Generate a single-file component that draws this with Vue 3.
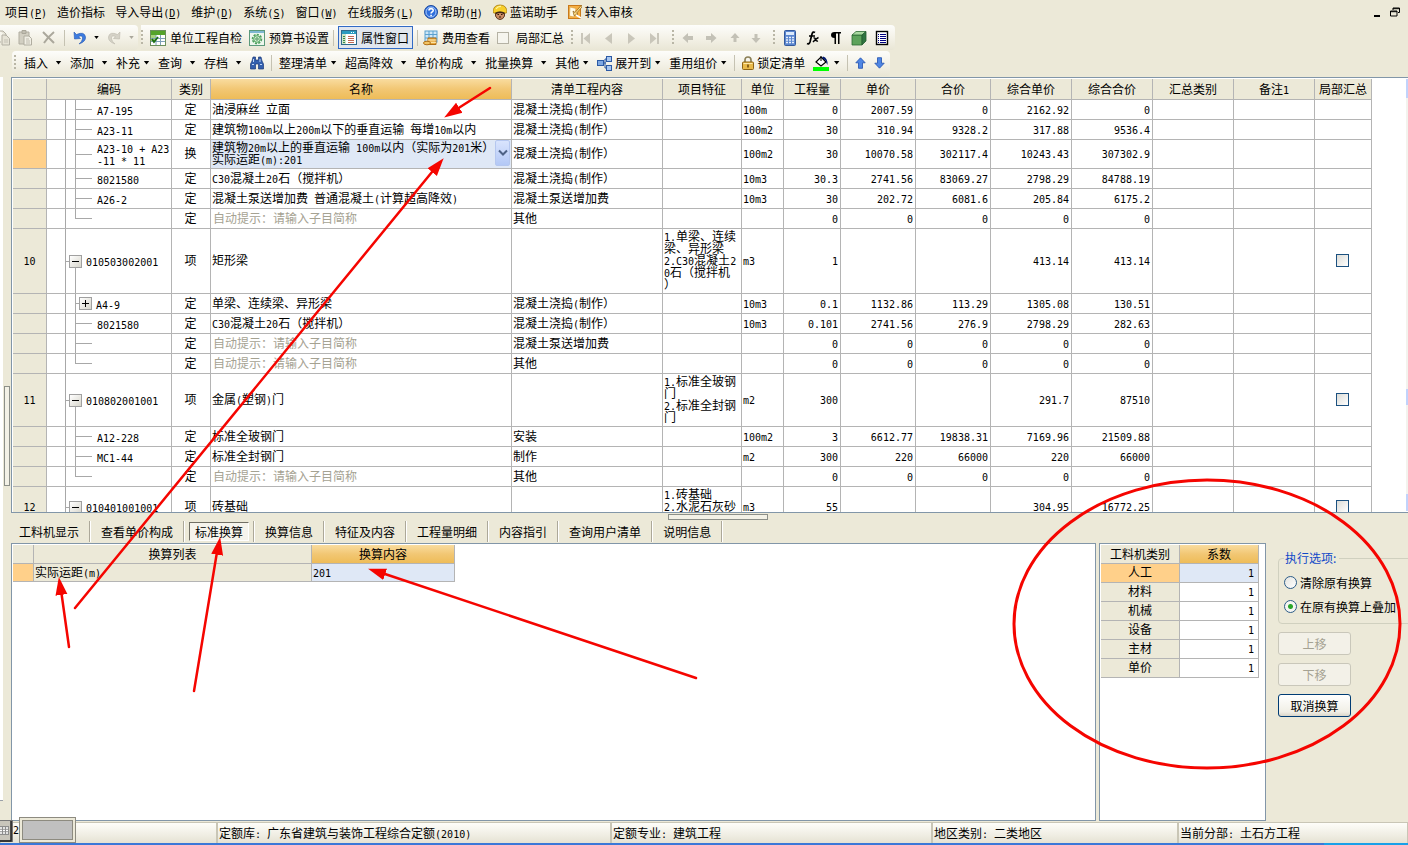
<script setup>
import { h, ref } from 'vue'

const Mix = (props) =>
  h(
    'span',
    { class: 'mix' },
    props.t
      .split(/([\x20-\x7e]+)/)
      .filter((s) => s)
      .map((s) => (/^[\x20-\x7e]/.test(s) ? h('span', { class: 'latin' }, s) : s))
  )
Mix.props = ['t']

const menus = [
  { t: '项目', k: 'P' },
  { t: '造价指标' },
  { t: '导入导出', k: 'D' },
  { t: '维护', k: 'D' },
  { t: '系统', k: 'S' },
  { t: '窗口', k: 'W' },
  { t: '在线服务', k: 'L' },
]

const actions = [
  { t: '插入', wide: true },
  { t: '添加', wide: true },
  { t: '补充' },
  { t: '查询', wide: true },
  { t: '存档', wide: true },
]
const actions2 = [
  { t: '整理清单' },
  { t: '超高降效', wide: true },
  { t: '单价构成', wide: true },
  { t: '批量换算', wide: true },
  { t: '其他' },
]

const columns = [
  { t: '', w: 34 },
  { t: '编码', w: 125 },
  { t: '类别', w: 39 },
  { t: '名称', w: 301, hot: true },
  { t: '清单工程内容', w: 151 },
  { t: '项目特征', w: 79 },
  { t: '单位', w: 42 },
  { t: '工程量', w: 57 },
  { t: '单价', w: 75 },
  { t: '合价', w: 75 },
  { t: '综合单价', w: 81 },
  { t: '综合合价', w: 81 },
  { t: '汇总类别', w: 81 },
  { t: '备注1', w: 81 },
  { t: '局部汇总', w: 57 },
]

const hint = '自动提示：请输入子目简称'
const pour = '混凝土浇捣(制作）'
const rows = [
  { kind: 'child', code: 'A7-195', cat: '定', name: '油浸麻丝 立面', work: pour, unit: '100m', n: ['0', '2007.59', '0', '2162.92', '0'] },
  { kind: 'child', code: 'A23-11', cat: '定', name: '建筑物100m以上200m以下的垂直运输 每增10m以内', work: pour, unit: '100m2', n: ['30', '310.94', '9328.2', '317.88', '9536.4'] },
  { kind: 'child', sel: true, size: 'two', code: 'A23-10 + A23\n-11 * 11', cat: '换', name: '建筑物20m以上的垂直运输 100m以内（实际为201米）\n实际运距(m):201', work: pour, unit: '100m2', n: ['30', '10070.58', '302117.4', '10243.43', '307302.9'] },
  { kind: 'child', code: '8021580', cat: '定', name: 'C30混凝土20石（搅拌机）', work: pour, unit: '10m3', n: ['30.3', '2741.56', '83069.27', '2798.29', '84788.19'] },
  { kind: 'child', code: 'A26-2', cat: '定', name: '混凝土泵送增加费 普通混凝土(计算超高降效)', work: '混凝土泵送增加费', unit: '10m3', n: ['30', '202.72', '6081.6', '205.84', '6175.2'] },
  { kind: 'last', code: '', cat: '定', name: hint, hint: true, work: '其他', unit: '', n: ['0', '0', '0', '0', '0'] },
  { kind: 'parent', size: 'five', num: '10', code: '010503002001', cat: '项', name: '矩形梁', work: '', feat: '1.单梁、连续\n梁、异形梁\n2.C30混凝土2\n0石（搅拌机\n）', unit: 'm3', n: ['1', '', '', '413.14', '413.14'] },
  { kind: 'closed', code: 'A4-9', cat: '定', name: '单梁、连续梁、异形梁', work: pour, unit: '10m3', n: ['0.1', '1132.86', '113.29', '1305.08', '130.51'] },
  { kind: 'child', code: '8021580', cat: '定', name: 'C30混凝土20石（搅拌机）', work: pour, unit: '10m3', n: ['0.101', '2741.56', '276.9', '2798.29', '282.63'] },
  { kind: 'child', code: '', cat: '定', name: hint, hint: true, work: '混凝土泵送增加费', unit: '', n: ['0', '0', '0', '0', '0'] },
  { kind: 'last', code: '', cat: '定', name: hint, hint: true, work: '其他', unit: '', n: ['0', '0', '0', '0', '0'] },
  { kind: 'parent', size: 'four', num: '11', code: '010802001001', cat: '项', name: '金属(塑钢)门', work: '', feat: '1.标准全玻钢\n门\n2.标准全封钢\n门', unit: 'm2', n: ['300', '', '', '291.7', '87510'] },
  { kind: 'child', code: 'A12-228', cat: '定', name: '标准全玻钢门', work: '安装', unit: '100m2', n: ['3', '6612.77', '19838.31', '7169.96', '21509.88'] },
  { kind: 'child', code: 'MC1-44', cat: '定', name: '标准全封钢门', work: '制作', unit: 'm2', n: ['300', '220', '66000', '220', '66000'] },
  { kind: 'last', code: '', cat: '定', name: hint, hint: true, work: '其他', unit: '', n: ['0', '0', '0', '0', '0'] },
  { kind: 'parent', size: 'three', num: '12', code: '010401001001', cat: '项', name: '砖基础', work: '', feat: '1.砖基础\n2.水泥石灰砂\n浆', unit: 'm3', n: ['55', '', '', '304.95', '16772.25'] },
]

const tabs = ['工料机显示', '查看单价构成', '标准换算', '换算信息', '特征及内容', '工程量明细', '内容指引', '查询用户清单', '说明信息']
const tab = ref('标准换算')
const factors = ['人工', '材料', '机械', '设备', '主材', '单价']
const mode = ref('add')
const status = ['', '定额库: 广东省建筑与装饰工程综合定额(2010)', '定额专业: 建筑工程', '地区类别: 二类地区', '当前分部: 土石方工程']
</script>

<template>
  <div class="app">
    <nav class="menubar">
      <button v-for="m in menus" :key="m.t" class="flat">
        <span>{{ m.t }}<span v-if="m.k" class="latin">(<u>{{ m.k }}</u>)</span></span>
      </button>
      <button class="flat">
        <svg width="14" height="14" viewBox="0 0 14 14"><circle cx="7" cy="7" r="6.5" fill="#2f6fdc" stroke="#1d4a9e" /><circle cx="7" cy="7" r="5" fill="none" stroke="#a9c8f8" /><path d="M5 5.6C5 3 9.2 3 9.2 5.4 9.2 6.9 7.1 6.9 7.1 8.6M7.1 9.8v1.4" fill="none" stroke="#fff" stroke-width="1.6" /></svg>
        <span>帮助<span class="latin">(<u>H</u>)</span></span>
      </button>
      <button class="flat">
        <svg width="14" height="16" viewBox="0 0 14 16"><path d="M2.500 8h9v4q-1.500 3.500-4.500 3.500T2.500 12z" fill="#c98a63" stroke="#5d3620" /><path d="M0 8.500Q0 1 7 1t7 7.500l-2 .8Q7 6.500 2 9.300z" fill="#f7cf2b" stroke="#a87c0d" stroke-width=".8" /><path d="M3 5Q5 2 8 2.500" stroke="#fff3a0" stroke-width="1.300" fill="none" /><path d="M2.500 9.500Q7 7 11.500 9.500" stroke="#3a2416" stroke-width="1.600" fill="none" /><path d="M4.500 10.500h1.500M8 10.500h1.500M6 13h2" stroke="#301808" /></svg>
        <span>蓝诺助手</span>
      </button>
      <button class="flat">
        <svg width="14" height="16" viewBox="0 0 14 16"><rect x=".5" y="1.500" width="12" height="13" fill="#f6b042" stroke="#c9791a" /><path d="M2 3l6 1.500L6 13l-4.500-1z" fill="#fffbe8" stroke="#d89a3a" stroke-width=".6" /><path d="M13.500 1L7 8.500 5 7l1 4.500 4-1.500-1.500-.8L14 3z" fill="#ffe08a" stroke="#8a5a14" stroke-width=".7" /><path d="M8 11l5 3" stroke="#fff" stroke-width="1.500" /></svg>
        <span>转入审核</span>
      </button>
      <div class="winctl">
        <button class="flat" aria-label="最小化"><svg width="8" height="12" viewBox="0 0 8 12"><path d="M1 9h6v2H1z" /></svg></button>
        <button class="flat" aria-label="还原"><svg width="10" height="10" viewBox="0 0 10 10"><path d="M3 3V1h6.500v4.500H8M3 1.700h6.500M.5 4h6.500v5H.5zM.5 4.700h6.500" fill="none" stroke="#000" /></svg></button>
      </div>
    </nav>

    <div class="bar">
      <div class="band first">
        <button class="flat" aria-label="复制" disabled><svg width="10" height="16" viewBox="0 0 10 16"><path d="M0 1h3l3 3v2M0 12h1M2 5h4l3.500 3.500V15H2z" fill="#e6e3d6" stroke="#b3b0a4" /><path d="M4 10h4M4 12h4" stroke="#c4c1b5" /></svg></button>
        <button class="flat" aria-label="粘贴" disabled><svg width="15" height="16" viewBox="0 0 15 16"><path d="M1 2h10v12H1z" fill="#d2cfc2" stroke="#b0ada0" /><path d="M4 .5h4v3H4z" fill="#c2bfb2" stroke="#aaa79a" /><path d="M6 6h5l2.500 2.500v6.500H6z" fill="#f0eee4" stroke="#b0ada0" /><path d="M8 9h3M8 11h4M8 13h4" stroke="#c0bdb0" /></svg></button>
        <button class="flat" aria-label="删除" disabled><svg width="15" height="15" viewBox="0 0 15 15"><path d="M2 2l11 11M13 2Q7 7 3 13" fill="none" stroke="#aba89c" stroke-width="2" /></svg></button>
        <i class="sep"></i>
        <button class="flat drop wide" aria-label="撤销"><svg width="13" height="14" viewBox="0 0 13 14"><path d="M1 1l.5 7 6-.5-2-1.700C8 4 10 5 9.500 8q-.5 2.500-3.500 5Q13 10.500 12.500 6 11.500 0 3.500 3.500z" fill="#3d7ce0" stroke="#2356b0" stroke-width=".6" /></svg><i class="caret"></i></button>
        <button class="flat drop wide" aria-label="重做" disabled><svg width="13" height="14" viewBox="0 0 13 14"><path d="M12 1l-.5 7-6-.5 2-1.700C5 4 3 5 3.500 8q.5 2.500 3.500 5Q0 10.500.5 6 1.500 0 9.500 3.500z" fill="#d5d2c7" stroke="#bcb9ad" stroke-width=".6" /></svg><i class="caret dim"></i></button>
      </div>
      <div class="band tools">
        <i class="grip"></i>
        <button class="flat ico">
          <svg width="16" height="16" viewBox="0 0 16 16"><rect x=".5" y=".5" width="15" height="15" fill="#fff" stroke="#6c8f5c" /><path d="M1 1h14v4H1z" fill="#55a32a" /><path d="M1 5h5v6H1z" fill="#a6d37c" /><path d="M1 8.500h14M1 11.500h14M6 5v10M10.500 5v10" stroke="#7fa0b8" /><path d="M2 9l2 3 4-5" fill="none" stroke="#1c6f10" stroke-width="1.800" /></svg>
          <span>单位工程自检</span>
        </button>
        <button class="flat ico">
          <svg width="16" height="16" viewBox="0 0 16 16"><rect x=".5" y=".5" width="15" height="15" fill="#eef7ee" stroke="#5c9a7c" /><path d="M1 1h14v2H1z" fill="#7fb7d2" /><circle cx="8" cy="9" r="4.500" fill="none" stroke="#4da05c" stroke-width="1.500" stroke-dasharray="2.200 1.200" /><circle cx="8" cy="9" r="3.300" fill="#d5eed2" stroke="#4da05c" /><circle cx="8" cy="9" r="1.200" fill="#fff" stroke="#3a8b4a" /></svg>
          <span>预算书设置</span>
        </button>
        <i class="sep"></i>
        <button class="flat ico pressed">
          <svg width="16" height="16" viewBox="0 0 16 16"><rect x=".5" y=".5" width="15" height="14" fill="#fff" stroke="#2f6a8c" /><path d="M1 1h14v3H1z" fill="#2a9cc0" /><path d="M10 2.500h1M12 2.500h1" stroke="#fff" /><path d="M1 4h4v10H1z" fill="#cfe6c8" /><path d="M2 6.500h2M2 8.500h2M2 10.500h2M2 12.500h2" stroke="#3c8a4c" /><path d="M7 6.500h6M7 8.500h6M7 10.500h6M7 12.500h6" stroke="#bf6a54" /></svg>
          <span>属性窗口</span>
        </button>
        <i class="sep"></i>
        <button class="flat ico">
          <svg width="16" height="16" viewBox="0 0 16 16"><rect x="3" y="1" width="12" height="11" fill="#cfe7f7" stroke="#5ba1cf" /><path d="M3 4.500h12M3 8h12M7 1v11M11 1v11" stroke="#5ba1cf" /><path d="M6 8h8v6.500H6z" fill="#e8a83c" stroke="#b06f16" /><path d="M6 10h8M6 12.300h8" stroke="#fff0bf" /><ellipse cx="5" cy="13" rx="3.500" ry="1.800" fill="#f2c465" stroke="#b06f16" /></svg>
          <span>费用查看</span>
        </button>
        <label class="check"><input type="checkbox" class="box pale" /><span>局部汇总</span></label>
        <i class="grip"></i>
        <button class="flat" aria-label="首条" disabled><svg width="16" height="16" viewBox="0 0 16 16"><path d="M1 3h2v11H1zM10 3v11L3.500 8.500z" fill="#c9c6ba" /></svg></button>
        <button class="flat" aria-label="上一条" disabled><svg width="16" height="16" viewBox="0 0 16 16"><path d="M9 3v11L2 8.500z" fill="#c9c6ba" /></svg></button>
        <button class="flat" aria-label="下一条" disabled><svg width="16" height="16" viewBox="0 0 16 16"><path d="M2 3v11l7-5.500z" fill="#c9c6ba" /></svg></button>
        <button class="flat" aria-label="末条" disabled><svg width="16" height="16" viewBox="0 0 16 16"><path d="M8 3h2v11H8zM1 3v11l6.500-5.500z" fill="#c9c6ba" /></svg></button>
        <i class="grip"></i>
        <button class="flat" aria-label="左移" disabled><svg width="16" height="16" viewBox="0 0 16 16"><path d="M1.500 8L7 3v3h5v4H7v3z" fill="#c3c1b6" /></svg></button>
        <button class="flat" aria-label="右移" disabled><svg width="16" height="16" viewBox="0 0 16 16"><path d="M12.500 8L7 3v3H2v4h5v3z" fill="#c3c1b6" /></svg></button>
        <button class="flat" aria-label="上移一行" disabled><svg width="16" height="16" viewBox="0 0 16 16"><path d="M8 3l4.500 5h-3v4h-3V8h-3z" fill="#c3c1b6" /></svg></button>
        <button class="flat" aria-label="下移一行" disabled><svg width="16" height="16" viewBox="0 0 16 16"><path d="M6 13L1.500 8h3V4h3v4h3z" fill="#c3c1b6" /></svg></button>
        <i class="grip"></i>
        <button class="flat" aria-label="计算器"><svg width="16" height="16" viewBox="0 0 16 16"><rect x="2.500" y=".5" width="11" height="15" rx="1" fill="#5a86cf" stroke="#345a9c" /><path d="M4 2h8v3H4z" fill="#dceafc" /><path d="M4 7.500h8M4 10h8M4 12.500h8" stroke="#e8f0fc" stroke-width="1.500" stroke-dasharray="2 1" /></svg></button>
        <button class="flat" aria-label="函数"><svg width="16" height="16" viewBox="0 0 16 16"><path d="M10 2.500Q8 1 7 4L5 12Q4.200 14.500 2 13.500M4 6h6" fill="none" stroke="#000" stroke-width="1.700" /><path d="M8.500 8q1.500-.5 2 1.500t2.500 1.500M13.500 7.500Q11 8.500 8 12" fill="none" stroke="#000" stroke-width="1.400" /></svg></button>
        <button class="flat" aria-label="段落"><svg width="16" height="16" viewBox="0 0 16 16"><path d="M13 2H6.500Q3 2 3 5t3.500 3V14H8V3.500h2V14h1.500V3.500H13z" fill="#000" /></svg></button>
        <button class="flat" aria-label="图集"><svg width="16" height="16" viewBox="0 0 16 16"><path d="M1 5h10v10H1z" fill="#5ea35c" stroke="#2c6b33" stroke-width=".8" /><path d="M1 5l4-3.500h10L11 5z" fill="#a9d8a0" stroke="#2c6b33" stroke-width=".8" /><path d="M11 5l4-3.500V11l-4 4z" fill="#2f7440" stroke="#235a30" stroke-width=".8" /></svg></button>
        <button class="flat" aria-label="列表"><svg width="16" height="16" viewBox="0 0 16 16"><rect x="2.500" y="1.500" width="11" height="13" fill="#fff" stroke="#000" stroke-width="1.400" /><path d="M4 4.500h1M4 6.500h1M4 8.500h1M4 10.500h1M4 12.500h1" stroke="#000080" /><path d="M6 4.500h6M6 6.500h6M6 8.500h6M6 10.500h6M6 12.500h6" stroke="#000080" /></svg></button>
      </div>
    </div>

    <div class="bar">
      <div class="band second">
        <i class="grip"></i>
        <button v-for="a in actions" :key="a.t" class="flat drop" :class="{ wide: a.wide }">{{ a.t }}<i class="caret"></i></button>
        <button class="flat" aria-label="查找"><svg width="14" height="14" viewBox="0 0 14 14"><path d="M3 1h2.500v3h3V1H11l1 4 1.500 3v5H8.500V8h-3v5H.5V8L2 5z" fill="#335fae" stroke="#1b3a7a" stroke-width=".7" /><path d="M2 8.500h2M10 8.500h2M3.500 3v3M10 3v3" stroke="#bcd3f5" /></svg></button>
        <i class="sep"></i>
        <button v-for="a in actions2" :key="a.t" class="flat drop" :class="{ wide: a.wide }">{{ a.t }}<i class="caret"></i></button>
        <button class="flat drop">
          <svg class="lead" width="15" height="15" viewBox="0 0 15 15"><path d="M6 7h3M8 3v9M8 3h2M8 12h2" stroke="#23539e" fill="none" /><rect x=".5" y="4.500" width="6" height="5" fill="#7fa8e2" stroke="#2c5aa5" /><rect x="9.500" y=".5" width="5" height="5" fill="#a7c6f0" stroke="#2c5aa5" /><rect x="9.500" y="9.500" width="5" height="5" fill="#a7c6f0" stroke="#2c5aa5" /></svg>展开到<i class="caret"></i>
        </button>
        <button class="flat drop">重用组价<i class="caret"></i></button>
        <i class="sep"></i>
        <button class="flat">
          <svg width="12" height="14" viewBox="0 0 12 14"><path d="M3 6V4q0-3 3-3t3 3v2" fill="none" stroke="#8b8058" stroke-width="1.700" /><rect x=".5" y="6" width="11" height="7.500" rx="1" fill="#e9ba4a" stroke="#8d6416" /><path d="M1.500 7.500h9" stroke="#ffe9a8" /><path d="M6 8.500v3" stroke="#6a4408" stroke-width="1.500" /></svg>
          <span>锁定清单</span>
        </button>
        <button class="flat drop" aria-label="填充颜色"><svg width="17" height="16" viewBox="0 0 17 16"><path d="M0 12h16v4H0z" fill="#0f0" /><path d="M3 7l5-5 5 5-5 4z" fill="#fff" stroke="#000" stroke-width="1.200" /><path d="M8 1v5" stroke="#000" /><path d="M10 1.500Q15 3 14.500 10 13 8 13 6L9 3z" fill="#00186e" /></svg><i class="caret"></i></button>
        <i class="sep"></i>
        <button class="flat" aria-label="上移"><svg width="11" height="12" viewBox="0 0 11 12"><path d="M5.500.8l4.700 5H7.500v5.500h-4V5.800H.8z" fill="#4f86e4" stroke="#1f4fae" stroke-width=".8" /></svg></button>
        <button class="flat" aria-label="下移"><svg width="11" height="12" viewBox="0 0 11 12"><path d="M5.500 11.200l-4.700-5h2.700V.7h4v5.500h2.700z" fill="#4f86e4" stroke="#1f4fae" stroke-width=".8" /></svg></button>
      </div>
    </div>

    <div class="body">
      <div class="gutter"><i class="strip"></i><i class="handle"></i></div>
      <main class="work">
        <section class="grid-pane">
          <table class="grid main-grid">
            <colgroup><col v-for="(c, i) in columns" :key="i" :style="{ width: c.w + 'px' }" /></colgroup>
            <thead>
              <tr><th v-for="(c, i) in columns" :key="i" :class="{ hot: c.hot }"><Mix :t="c.t" /></th></tr>
            </thead>
            <tbody>
              <tr v-for="(r, i) in rows" :key="i" :class="[r.size, { sel: r.sel }]">
                <th><Mix :t="r.num || ''" /></th>
                <td class="tree" :class="r.kind">
                  <div class="node">
                    <button v-if="r.kind === 'parent'" class="fold" aria-label="收起"><svg width="11" height="11" viewBox="0 0 11 11"><path d="M2 5h7v1H2z" /></svg></button>
                    <button v-if="r.kind === 'closed'" class="fold" aria-label="展开"><svg width="11" height="11" viewBox="0 0 11 11"><path d="M2 5h7v1H2zM5 2h1v7H5z" /></svg></button>
                    <Mix :t="r.code" />
                  </div>
                </td>
                <td class="mid">{{ r.cat }}</td>
                <td class="name" :class="{ hint: r.hint }">
                  <div v-if="r.sel" class="editor">
                    <Mix :t="r.name" />
                    <button class="combo" aria-label="下拉"><svg width="10" height="8" viewBox="0 0 10 8"><path d="M1 1.500l4 4 4-4" fill="none" stroke="#4d6185" stroke-width="2" /></svg></button>
                  </div>
                  <Mix v-else :t="r.name" />
                </td>
                <td><Mix :t="r.work" /></td>
                <td><Mix :t="r.feat || ''" /></td>
                <td><Mix :t="r.unit" /></td>
                <td v-for="(v, j) in r.n" :key="j" class="num"><Mix :t="v" /></td>
                <td></td>
                <td></td>
                <td class="mid"><input v-if="r.kind === 'parent'" type="checkbox" class="box" aria-label="局部汇总" /></td>
              </tr>
            </tbody>
          </table>
          <i class="scroll"></i>
        </section>

        <div class="splitter"><i></i></div>
        <div class="tabs">
          <div v-for="t in tabs" :key="t" class="tab">
            <button class="flat" :class="{ on: t === tab }" @click="tab = t">{{ t }}</button>
          </div>
        </div>

        <section class="lower">
          <div class="pane list">
            <table class="grid small">
              <colgroup><col class="w-mark" /><col class="w-list" /><col class="w-value" /></colgroup>
              <thead><tr><th></th><th>换算列表</th><th class="hot">换算内容</th></tr></thead>
              <tbody><tr class="sel"><th></th><td class="fixed"><Mix t="实际运距(m)" /></td><td class="name"><Mix t="201" /></td></tr></tbody>
            </table>
          </div>
          <div class="pane factors">
            <table class="grid small fac">
              <colgroup><col class="w-half" /><col class="w-half" /></colgroup>
              <thead><tr><th>工料机类别</th><th class="hot">系数</th></tr></thead>
              <tbody>
                <tr v-for="(f, i) in factors" :key="f" :class="{ sel: i === 0 }"><th>{{ f }}</th><td class="num name"><Mix t="1" /></td></tr>
              </tbody>
            </table>
          </div>
          <aside class="side">
            <fieldset>
              <legend>执行选项:</legend>
              <label><input v-model="mode" type="radio" name="mode" value="clear" /><span>清除原有换算</span></label>
              <label><input v-model="mode" type="radio" name="mode" value="add" /><span>在原有换算上叠加</span></label>
            </fieldset>
            <button class="push" disabled>上移</button>
            <button class="push" disabled>下移</button>
            <button class="push live">取消换算</button>
          </aside>
        </section>
      </main>
    </div>

    <footer>
      <div class="status"><div v-for="(s, i) in status" :key="i"><Mix :t="s" /></div></div>
      <div class="edge"></div>
      <div class="ime">
        <svg width="13" height="22" viewBox="0 0 13 22"><path d="M0 0h13v22H0z" fill="#777" /><path d="M0 1h11v19H0z" fill="#c8c5bb" /><path d="M11 1v20H0" fill="none" stroke="#222" stroke-width="1.500" /><path d="M0 6h9v9H0z" fill="#8d8d8d" /><path d="M0 8h9M0 10.500h9M0 13h9" stroke="#fff" stroke-width="1.300" stroke-dasharray="2 1" /></svg>
        <span class="latin">2</span>
        <i class="thumb"></i>
      </div>
    </footer>

    <svg class="marks" width="1408" height="845" viewBox="0 0 1408 845" aria-hidden="true">
      <defs><marker id="tip" markerUnits="userSpaceOnUse" markerWidth="18" markerHeight="14" refX="17" refY="7" orient="auto"><path d="M0 1l18 6-18 6z" fill="#f50500" /></marker></defs>
      <g fill="none" stroke="#f50500" stroke-width="3" stroke-linecap="round">
        <ellipse cx="1207" cy="624" rx="193" ry="144" />
        <g stroke-width="2.500">
          <path d="M490 88L457 109" /><path d="M75 608L432 172" /><path d="M69 647L61 590" /><path d="M194 691L217 552" /><path d="M696 678L382 573" />
        </g>
        <g stroke="none">
          <path d="M490 88L445 117" marker-end="url(#tip)" /><path d="M75 608L443 159" marker-end="url(#tip)" /><path d="M69 647L59 578" marker-end="url(#tip)" /><path d="M194 691L220 538" marker-end="url(#tip)" /><path d="M696 678L369 569" marker-end="url(#tip)" />
        </g>
      </g>
    </svg>
  </div>
</template>

<style>
body { margin: 0; overflow: hidden; background: #ece9d8; }
</style>

<style scoped>
.app, .app * { box-sizing: border-box; }
.app {
  position: relative;
  display: flex;
  flex-direction: column;
  height: 100vh;
  overflow: hidden;
  background: #ece9d8;
  color: #000;
  font: 12px/12px "Noto Sans CJK SC", sans-serif;
  white-space: nowrap;
}
svg { display: block; flex: none; }
.latin, :deep(.latin) { font: 10px/8px "DejaVu Sans Mono", monospace; white-space: inherit; }
:deep(.mix) { white-space: pre; }
button { font: inherit; color: inherit; }
.flat { display: flex; align-items: center; gap: 3px; padding: 0; border: 0; background: none; white-space: nowrap; flex: none; }

.menubar { display: flex; align-items: center; gap: 10px; flex: none; height: 25px; padding: 0 0 2px 5px; }
.winctl { display: flex; gap: 9px; margin-left: auto; padding-right: 8px; }

.bar { display: flex; flex: none; height: 26px; }
.band {
  display: flex;
  align-items: center;
  height: 25px;
  gap: 8px;
  padding-right: 5px;
  border-radius: 0 4px 4px 0;
  background: linear-gradient(#fdfdfb, #f4f2e8 50%, #e9e6d5);
}
.first { padding-right: 3px; margin-right: 3px; }
.tools { gap: 7px; }
.second { margin-left: 12px; padding-left: 2px; padding-bottom: 1px; border-radius: 4px; }
.sep { flex: none; width: 1px; height: 16px; background: #c5c2b2; }
.tools .sep { margin: 0 -3px; }
.second .sep { margin: 0 -1px; }
.grip { flex: none; width: 2px; height: 16px; background: repeating-linear-gradient(#b9b6a6 0 2px, transparent 2px 4px); }
.ico { gap: 4px; }
.pressed { height: 23px; padding: 0 3px 0 2px; border: 1px solid #316ac5; background: #e1e6ee; }
.drop { gap: 3px; }
.wide { gap: 7px; }
.caret { width: 7px; height: 4px; background: #000; clip-path: polygon(12% 0, 88% 0, 50% 90%); }
.caret.dim { background: #aaa79b; }
.check { display: flex; align-items: center; gap: 7px; }

.box {
  appearance: none;
  display: block;
  width: 13px;
  height: 13px;
  margin: 0;
  border: 1px solid #1c5180;
  background: linear-gradient(135deg, #dcdcd7, #fff);
}
.box.pale { width: 12px; height: 12px; border-color: #b5b2a4; background: #f6f5ee; }

.body { display: flex; flex: 1; min-height: 0; }
.gutter { position: relative; display: flex; align-items: center; flex: none; width: 11px; padding: 0 0 28px 4px; }
.strip { position: absolute; left: 0; top: 0; bottom: 21px; width: 3px; background: #fff; border-bottom: 1px solid #9aa0a8; }
.handle { width: 6px; height: 100px; border: 1px solid #8c8f88; background: #f3f1e6; }

.work { display: flex; flex-direction: column; flex: 1; min-width: 0; padding-bottom: 1px; }
.grid-pane {
  display: flex;
  justify-content: space-between;
  flex: 14 1 0;
  min-height: 0;
  padding: 1px 0 1px 1px;
  border: solid #8296a8;
  border-width: 1px 0 1px 1px;
  background: #fff;
  overflow: hidden;
}
.scroll { flex: none; width: 2px; background: linear-gradient(#c1d3fb 0 19px, #f3f3ee 19px 310px, #c1d3fb 310px 326px, #f3f3ee 326px 415px, #c1d3fb 415px); }

.grid { flex: none; align-self: flex-start; table-layout: fixed; border-collapse: separate; border-spacing: 0; width: 1359px; }
.grid th, .grid td { height: 20px; padding: 0 2px 2px 1px; border: solid #b4b4b4; border-width: 0 1px 1px 0; font-weight: normal; text-align: left; overflow: hidden; }
.grid th { padding: 0 0 2px; text-align: center; background: #ece9d8; }
.grid thead th { height: 21px; padding-bottom: 1px; }
.grid tr.two > * { height: 29px; }
.grid tr.three > * { height: 41px; }
.grid tr.four > * { height: 53px; }
.grid tr.five > * { height: 65px; }
.grid .hot { background: linear-gradient(#f9dc9f, #f2c774 50%, #eebc58); }
.grid .mid { text-align: center; }
.grid .mid .box { margin: 0 auto; }
.grid .num { text-align: right; }
.grid .hint { padding-left: 2px; color: #a5a292; }
.grid tr.sel > th { background: #ffd08a; }
.grid tr.sel > .name { background: #dfe8f6; }
.grid tr.sel > .fixed { background: #ece9d8; }
.editor { display: flex; align-items: center; justify-content: space-between; }
.combo { display: grid; place-items: center; flex: none; width: 15px; height: 26px; margin-right: -1px; padding: 0; border: 1px solid #b5c7ef; border-radius: 2px; background: linear-gradient(#d9e4fd, #b3c8f6); }

.grid .tree {
  --ln: linear-gradient(#a8a8a8, #a8a8a8);
  padding-left: 50px;
  padding-bottom: 0;
  background: var(--ln) 18px 0 / 1px 100% no-repeat, var(--ln) 28px 0 / 1px 100% no-repeat, var(--ln) 28px 50% / 17px 1px no-repeat;
}
.grid .tree.last { background: var(--ln) 18px 0 / 1px 100% no-repeat, var(--ln) 28px 0 / 1px 50% no-repeat, var(--ln) 28px 50% / 17px 1px no-repeat; }
.grid .tree.parent { padding-left: 22px; background: var(--ln) 18px 0 / 1px 100% no-repeat, var(--ln) 28px 100% / 1px 50% no-repeat, var(--ln) 18px 50% / 6px 1px no-repeat; }
.grid .tree.closed { padding-left: 32px; }
.node { display: flex; align-items: center; gap: 4px; }
.fold { flex: none; width: 13px; height: 13px; padding: 0; border: 1px solid #a0a0a0; background: linear-gradient(135deg, #fff, #d8d6cc); }

.splitter { display: flex; justify-content: center; flex: none; height: 7px; padding: 1px 0 0 16px; }
.splitter i { width: 100px; height: 6px; border: 1px solid #8c8f88; background: #f3f1e6; }
.tabs { display: flex; align-items: center; flex: none; height: 23px; }
.tab { display: flex; align-items: center; height: 21px; padding: 0 4px 0 5px; border-right: 1px solid #aca899; box-shadow: 1px 0 #fff; }
.tab:first-child { padding-left: 2px; }
.tab .flat { height: 19px; padding: 0 5px; border: 1px solid transparent; }
.tab .on { border-color: #716f64 #fff #fff #716f64; background: #f6f4ec; }

.lower { display: flex; flex: 9 1 0; min-height: 0; gap: 3px; }
.pane { padding: 1px; border: 1px solid #8296a8; background: #fff; overflow: hidden; }
.list { flex: 1; min-width: 0; }
.factors { flex: none; width: 167px; }
.small { width: 442px; }
.fac { width: 158px; }
.w-mark { width: 21px; }
.w-list { width: 278px; }
.w-value { width: 143px; }
.w-half { width: 79px; }
.grid.small th, .grid.small td { height: 18px; }
.grid.small thead th, .grid.fac th, .grid.fac td { height: 19px; }
.fac .num { padding-right: 4px; }
.side { display: flex; flex-direction: column; align-items: flex-start; flex: none; width: 139px; gap: 8px; padding: 9px 0 0 9px; }
fieldset { align-self: stretch; display: flex; flex-direction: column; gap: 11px; height: 72px; margin: 0 -6px 0 0; padding: 12px 0 0 5px; border: 1px solid #d0d0bf; border-radius: 4px; }
legend { padding: 0 3px 0 1px; color: #1048c8; }
fieldset label { display: flex; align-items: center; gap: 3px; }
input[type="radio"] { appearance: none; flex: none; width: 13px; height: 13px; margin: 0; border: 1px solid #2c5c88; border-radius: 50%; background: linear-gradient(135deg, #e4e4df, #fff); }
input[type="radio"]:checked { background: radial-gradient(circle, #2aa52a 0 2px, #f6f6f3 3px); }
.push { width: 73px; height: 23px; padding: 0; border: 1px solid #c9c7ba; border-radius: 3px; background: #f3f1e8; color: #a5a292; }
.push.live { border-color: #003c74; background: linear-gradient(#fff, #f1efe6 80%, #dad6ca); color: #000; }

footer { position: relative; flex: none; }
.status { display: grid; grid-template-columns: 217fr 394fr 321fr 246fr 230fr; height: 21px; gap: 0; background: linear-gradient(#fffffb, #f0eee4 60%, #e5e2d3); }
.status div { display: flex; align-items: center; min-width: 0; padding: 0 0 1px 1px; border: 1px solid #c9c6b6; border-width: 1px 1px 0 1px; overflow: hidden; }
.edge { height: 2px; background: linear-gradient(90deg, #3a78d8 94%, #18a0e8 94%); }
.ime { position: absolute; left: 0; bottom: 2px; display: flex; align-items: center; }
.thumb { width: 57px; height: 26px; margin-top: -2px; border: 3px solid #ece9d8; outline: 1px solid #8d8b80; outline-offset: -1px; background: #c0c0c0; box-shadow: inset 0 0 0 1px #8d8b80; }
.marks { position: absolute; left: 0; top: 0; pointer-events: none; }
</style>
